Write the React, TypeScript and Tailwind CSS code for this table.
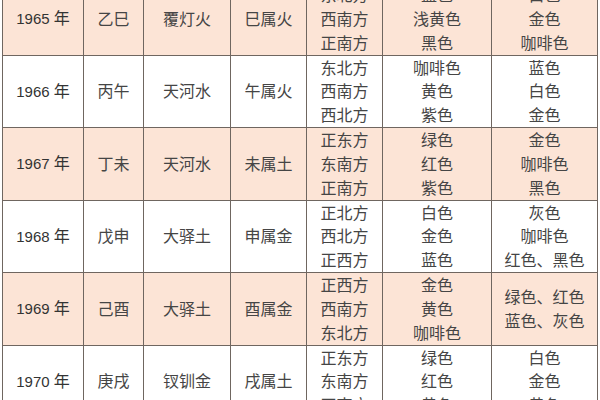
const rows = [
  {
    year: '1965',
    gz: '乙巳',
    ny: '覆灯火',
    sx: '巳属火',
    dir: ['东北方', '西南方', '正南方'],
    lucky: ['蓝色', '浅黄色', '黑色'],
    other: ['白色', '金色', '咖啡色'],
  },
  {
    year: '1966',
    gz: '丙午',
    ny: '天河水',
    sx: '午属火',
    dir: ['东北方', '西南方', '西北方'],
    lucky: ['咖啡色', '黄色', '紫色'],
    other: ['蓝色', '白色', '金色'],
  },
  {
    year: '1967',
    gz: '丁未',
    ny: '天河水',
    sx: '未属土',
    dir: ['正东方', '东南方', '正南方'],
    lucky: ['绿色', '红色', '紫色'],
    other: ['金色', '咖啡色', '黑色'],
  },
  {
    year: '1968',
    gz: '戊申',
    ny: '大驿土',
    sx: '申属金',
    dir: ['正北方', '西北方', '正西方'],
    lucky: ['白色', '金色', '蓝色'],
    other: ['灰色', '咖啡色', '红色、黑色'],
  },
  {
    year: '1969',
    gz: '己酉',
    ny: '大驿土',
    sx: '酉属金',
    dir: ['正西方', '西南方', '东北方'],
    lucky: ['金色', '黄色', '咖啡色'],
    other: ['绿色、红色', '蓝色、灰色'],
  },
  {
    year: '1970',
    gz: '庚戌',
    ny: '钗钏金',
    sx: '戌属土',
    dir: ['正东方', '东南方', '正南方'],
    lucky: ['绿色', '红色', '黄色'],
    other: ['白色', '金色', '黄色'],
  },
];

const cell = 'border border-[#6f6660] p-0 text-center align-middle';

function Lines({ items }: { items: string[] }) {
  return (
    <div className="flex flex-col items-center">
      {items.map((t, i) => (
        <span key={i}>{t}</span>
      ))}
    </div>
  );
}

export default function App() {
  return (
    <div className="h-[400px] w-[600px] overflow-hidden bg-white">
      <table
        className="-mt-[18px] ml-[2px] w-[595px] table-fixed border-collapse text-[16px] leading-[23.8px] text-[#454545]"
        style={{ fontFamily: '"Noto Sans CJK SC", "Noto Sans", sans-serif' }}
      >
        <colgroup>
          <col className="w-[81px]" />
          <col className="w-[60px]" />
          <col className="w-[87px]" />
          <col className="w-[76px]" />
          <col className="w-[76px]" />
          <col className="w-[109px]" />
          <col className="w-[106px]" />
        </colgroup>
        <tbody>
          {rows.map((r, i) => (
            <tr key={r.year} className={i % 2 === 0 ? 'h-[72.5px] bg-[#fce4d6]' : 'h-[72.5px] bg-white'}>
              <td className={cell}>
                <span className="font-['Liberation_Sans',sans-serif] text-[15px] text-[#333]">{r.year} </span>
                <span className="text-[#333]">年</span>
              </td>
              <td className={cell}>{r.gz}</td>
              <td className={cell}>{r.ny}</td>
              <td className={cell}>{r.sx}</td>
              <td className={cell}>
                <Lines items={r.dir} />
              </td>
              <td className={cell}>
                <Lines items={r.lucky} />
              </td>
              <td className={cell}>
                <Lines items={r.other} />
              </td>
            </tr>
          ))}
        </tbody>
      </table>
    </div>
  );
}
